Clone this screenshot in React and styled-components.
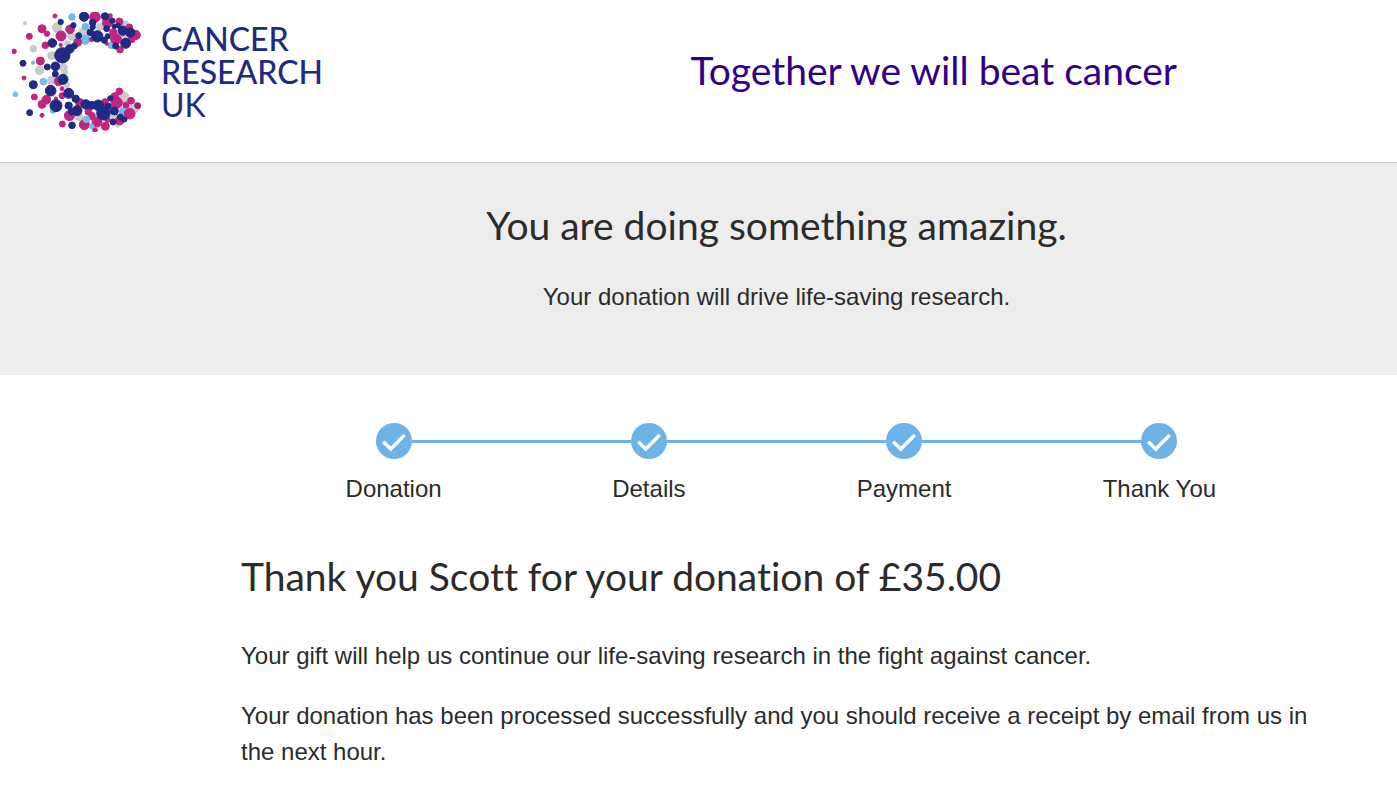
import React from "react";
import styled, { createGlobalStyle } from "styled-components";

const GlobalStyle = createGlobalStyle`
  *, *::before, *::after { box-sizing: border-box; }
  body {
    margin: 0;
    background: #ffffff;
    color: #2b2b2b;
    font-family: "Liberation Sans", Arial, sans-serif;
    font-size: 24px;
    line-height: 36px;
  }
`;

const displayFont = `Lato, "Noto Sans", sans-serif`;

const Header = styled.header`
  display: flex;
  justify-content: space-between;
  align-items: flex-start;
  padding: 12px 220px 30px 12px;
  border-bottom: 1px solid #c4c4c4;
`;

const LogoLink = styled.a`
  display: flex;
  gap: 19px;
  color: #1f2a85;
  text-decoration: none;
`;

const LogoMark = styled.svg`
  display: block;
  width: 130px;
  height: 120px;
`;

const LogoWords = styled.span`
  display: flex;
  flex-direction: column;
  padding-top: 10px;
  font-family: ${displayFont};
  font-size: 32px;
  line-height: 33px;
`;

const LogoLine = styled.span`
  font-weight: ${(p) => (p.$light ? 400 : 500)};
`;

const Tagline = styled.p`
  margin: 34px 0 0;
  color: #2e008b;
  font-family: ${displayFont};
  font-size: 39px;
  line-height: 48px;
  white-space: nowrap;
`;

const Heading = styled.h1`
  margin: 0;
  font-family: ${displayFont};
  font-size: 39px;
  font-variant-ligatures: none;
  font-weight: 400;
  line-height: 48px;
`;

const Banner = styled.section`
  padding: 38px 85px 60px 241px;
  background: #ededed;
  text-align: center;
`;

const BannerText = styled.p`
  margin: 30px 0 0;
`;

const Content = styled.main`
  padding: 48px 85px 36px 241px;
`;

const Steps = styled.ol`
  display: grid;
  grid-template-columns: repeat(4, 1fr);
  margin: 0 25px;
  padding: 0;
  list-style: none;
`;

const Step = styled.li`
  display: flex;
  flex-direction: column;
  gap: 12px;
`;

const Track = styled.span`
  display: flex;
  align-items: center;
`;

const Rail = styled.span`
  flex: 1;
  height: 3px;
  background: ${(p) => (p.$hidden ? "transparent" : "#6db3e8")};
`;

const StepMark = styled.svg`
  display: block;
  flex: none;
  width: 36px;
  height: 36px;
`;

const StepLabel = styled.span`
  text-align: center;
`;

const Message = styled.section`
  margin-top: 45px;
`;

const Paragraph = styled.p`
  margin: 24px 0 0;

  ${Heading} + & {
    margin-top: 38px;
  }
`;

const dots = [
  ["#c8cbcc", [[75,70,5],[171,83,14],[215,110,11],[202,131,9],[100,146,10],[155,167,12],[190,203,12],[119,211,13],[194,216,9],[154,241,12],[200,254,9],[375,72,10],[300,80,11],[250,97,14],[373,113,10],[370,292,17],[403,323,16],[340,350,14],[352,377,5],[238,352,11]]],
  ["#74bbe9", [[216,51,10],[99,188,5],[130,245,10],[46,283,7],[159,332,8],[256,80,10],[256,119,14],[334,136,10],[370,334,13]]],
  ["#c2247f", [[165,48,6],[126,86,12],[141,101,8],[210,88,13],[183,108,15],[88,109,9],[136,136,10],[182,135,5],[233,127,12],[42,154,7],[121,183,12],[72,234,6],[176,244,13],[186,266,6],[186,287,9],[103,291,9],[139,299,13],[126,313,12],[168,296,5],[126,346,6],[208,347,15],[187,372,9],[240,309,13],[285,51,16],[331,47,6],[322,68,15],[358,65,11],[388,82,10],[407,105,14],[395,118,10],[340,97,11],[348,117,16],[275,118,7],[320,131,5],[360,149,10],[315,306,10],[344,289,11],[350,308,17],[358,274,10],[393,302,10],[378,315,9],[389,341,16],[265,335,10],[275,348,11],[322,359,8],[359,362,13],[291,366,15],[253,374,15],[285,390,7],[316,379,12]]],
  ["#74bbe9", [[259,358,10],[275,379,7]]],
  ["#9d1f69", [[413,317,9]]],
  ["#1f2a85", [[182,66,8],[220,76,8],[157,129,13],[236,107,9],[187,166,23],[209,147,13],[223,138,9],[69,190,9],[142,201,9],[166,199,13],[166,222,9],[100,254,12],[189,238,15],[152,272,16],[206,280,15],[168,317,18],[206,317,11],[227,296,11],[89,338,9],[231,332,15],[215,335,10],[216,376,10],[252,50,14],[315,49,11],[278,68,10],[337,62,8],[278,81,8],[320,86,9],[343,79,7],[355,77,7],[368,92,14],[391,98,14],[377,130,15],[271,97,10],[292,109,17],[323,109,8],[313,121,9],[347,138,9],[257,313,14],[275,316,12],[295,316,16],[331,295,8],[310,340,20],[324,319,10],[343,333,12],[361,351,9],[373,358,8],[339,366,9]]],
];

function Logo() {
  return (
    <LogoLink href="/" aria-label="Cancer Research UK">
      <LogoMark viewBox="36 36 390 360" aria-hidden="true">
        {dots.map(([fill, circles], i) => (
          <g key={i} fill={fill} stroke={fill} strokeWidth="3">
            {circles.map(([cx, cy, r]) => (
              <circle key={`${cx}-${cy}`} cx={cx} cy={cy} r={r} />
            ))}
          </g>
        ))}
      </LogoMark>
      <LogoWords>
        <LogoLine>CANCER</LogoLine>
        <LogoLine>RESEARCH</LogoLine>
        <LogoLine $light>UK</LogoLine>
      </LogoWords>
    </LogoLink>
  );
}

const steps = ["Donation", "Details", "Payment", "Thank You"];

export default function App() {
  return (
    <>
      <GlobalStyle />
      <Header>
        <Logo />
        <Tagline>Together we will beat cancer</Tagline>
      </Header>
      <Banner>
        <Heading as="h2">You are doing something amazing.</Heading>
        <BannerText>Your donation will drive life-saving research.</BannerText>
      </Banner>
      <Content>
        <Steps>
          {steps.map((label, i) => (
            <Step key={label}>
              <Track>
                <Rail $hidden={i === 0} />
                <StepMark viewBox="0 0 36 36" aria-hidden="true">
                  <circle cx="18" cy="18" r="18" fill="#6db3e8" />
                  <path d="M7.2 18.7 L14.8 26 L28.7 12" fill="none" stroke="#ffffff" strokeWidth="3.5" />
                </StepMark>
                <Rail $hidden={i === steps.length - 1} />
              </Track>
              <StepLabel>{label}</StepLabel>
            </Step>
          ))}
        </Steps>
        <Message>
          <Heading>Thank you Scott for your donation of £35.00</Heading>
          <Paragraph>
            Your gift will help us continue our life-saving research in the fight against cancer.
          </Paragraph>
          <Paragraph>
            Your donation has been processed successfully and you should receive a receipt by email
            from us in the next hour.
          </Paragraph>
        </Message>
      </Content>
    </>
  );
}
